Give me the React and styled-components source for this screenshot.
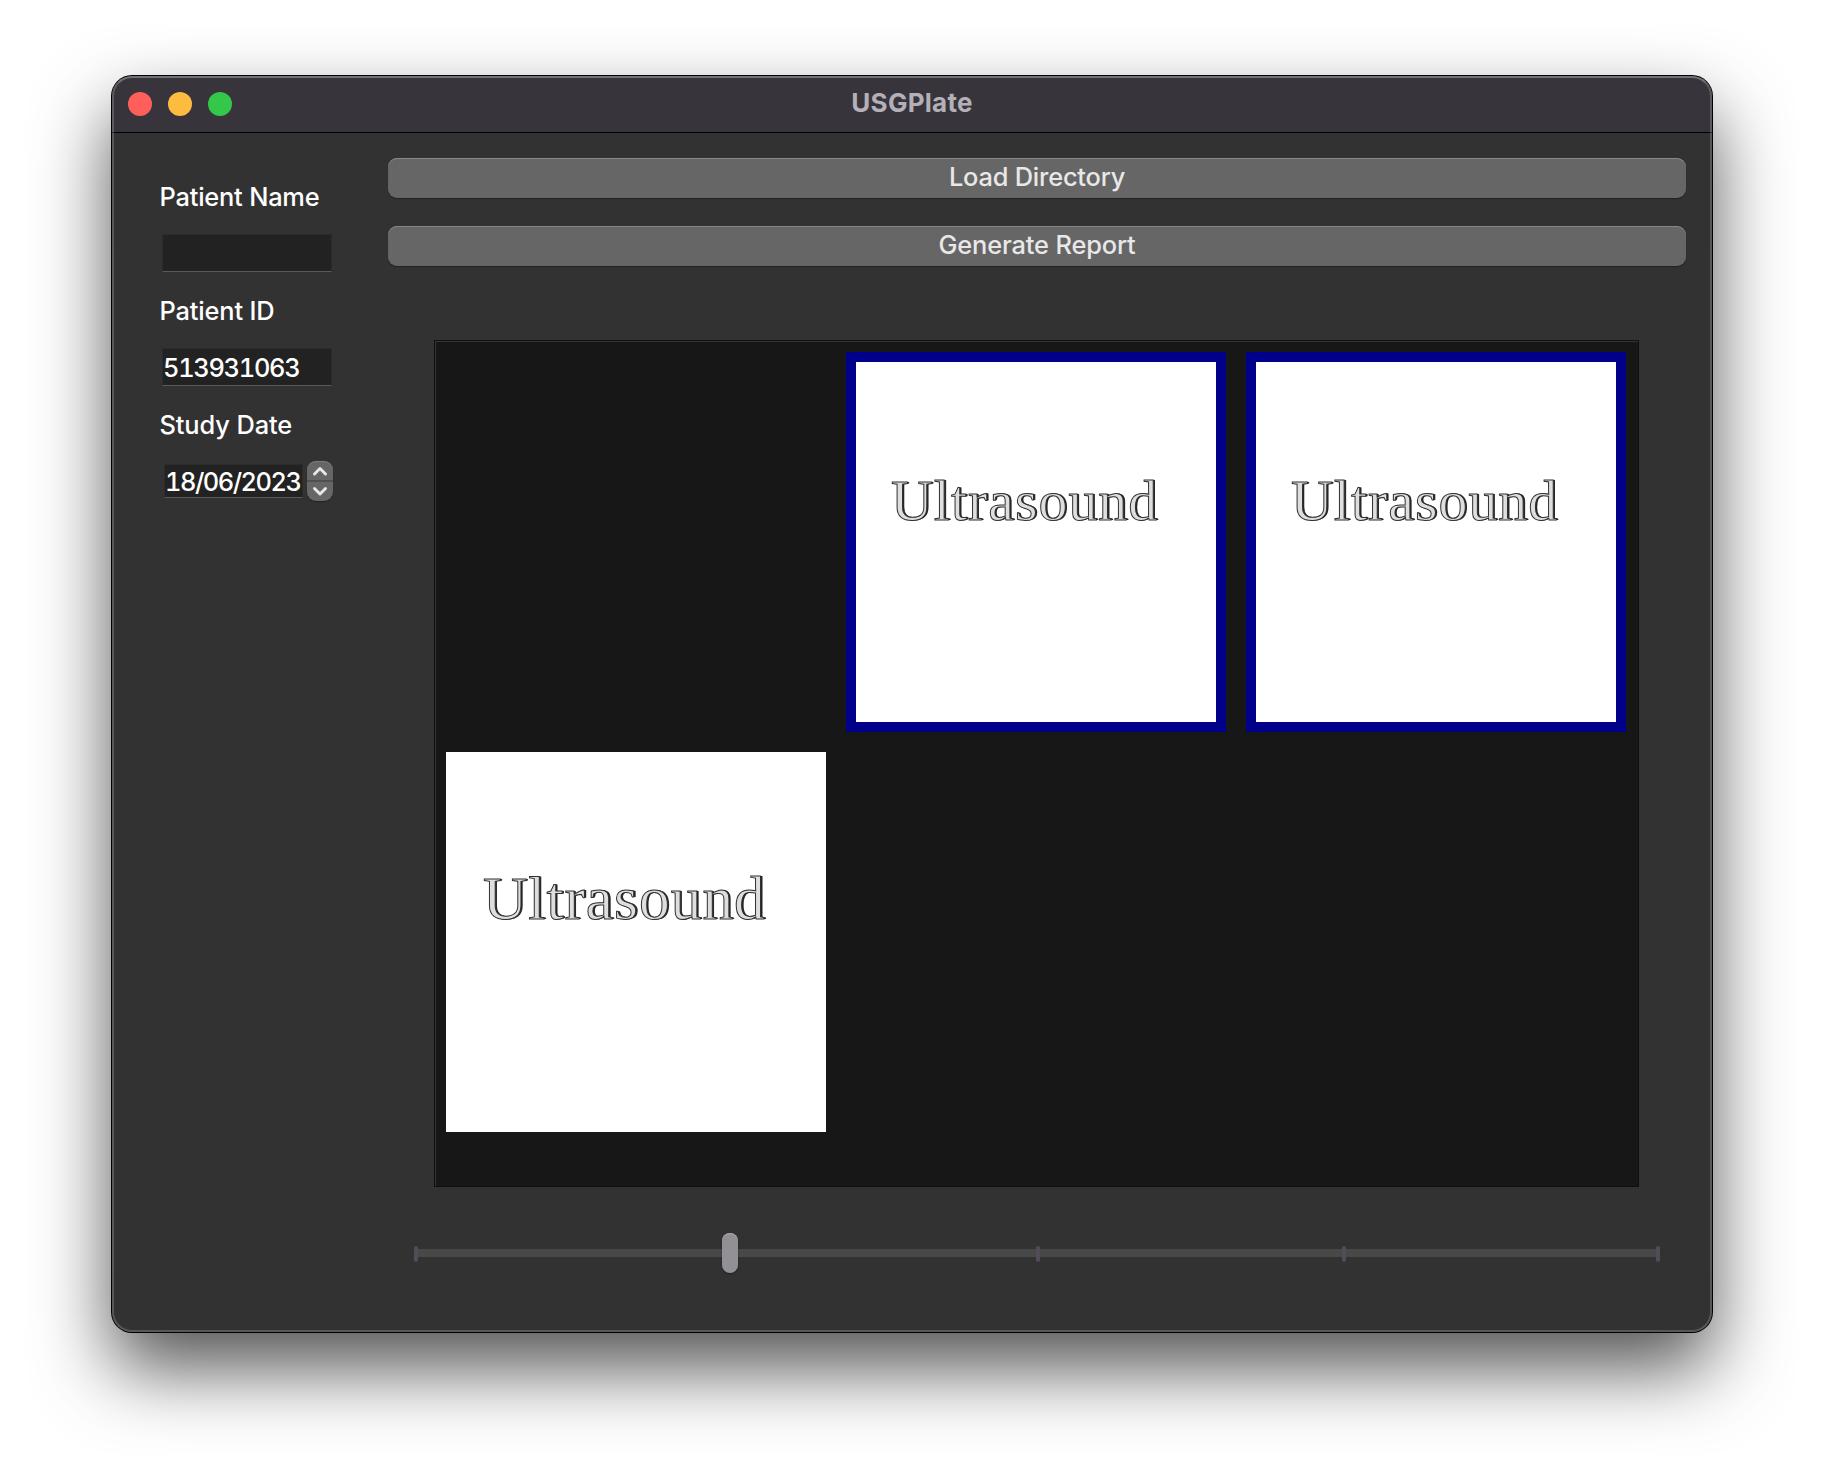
import React from "react";
import styled, { createGlobalStyle } from "styled-components";

const Global = createGlobalStyle`
  * { box-sizing: border-box; }
  html, body { margin: 0; background: #fff; }
  body { font-family: Inter, "Liberation Sans", sans-serif; overflow: hidden; }
`;

const Desktop = styled.div`
  width: 1824px;
  height: 1480px;
  padding: 76px 112px 148px;
  overflow: hidden;
`;

const Window = styled.main`
  position: relative;
  width: 1600px;
  height: 1256px;
  display: flex;
  flex-direction: column;
  border-radius: 20px;
  background: #323232;
  box-shadow: 0 0 0 1px #000, 0 36px 76px rgba(0, 0, 0, 0.68);
  &::after {
    content: "";
    position: absolute;
    inset: 0;
    border: 2px solid rgba(255, 255, 255, 0.19);
    border-top-color: rgba(255, 255, 255, 0.3);
    border-radius: 20px;
    pointer-events: none;
  }
`;

const TitleBar = styled.header`
  height: 57px;
  flex: none;
  display: grid;
  grid-template-columns: 1fr auto 1fr;
  align-items: center;
  padding: 0 16px;
  border-bottom: 1px solid #000;
  border-radius: 20px 20px 0 0;
  background: #38343b;
`;

const Lights = styled.div`
  display: flex;
  gap: 16px;
`;

const Light = styled.span`
  width: 24px;
  height: 24px;
  border-radius: 50%;
  background: ${(p) => p.$color};
`;

const Title = styled.h1`
  margin: 0;
  padding-bottom: 3px;
  font-size: 26px;
  line-height: 32px;
  font-weight: 700;
  letter-spacing: ${(p) => p.$track}px;
  color: #b4b0b8;
`;

const Body = styled.div`
  flex: 1;
  display: flex;
`;

const Sidebar = styled.aside`
  width: 276px;
  padding: 48px 0 0 47.5px;
`;

const Field = styled.div`
  height: 114px;
`;

const Label = styled.label`
  display: block;
  height: 32px;
  font-size: 25.4px;
  line-height: 32px;
  font-weight: 500;
  white-space: nowrap;
  letter-spacing: ${(p) => p.$track}px;
  color: #fff;
`;

const Entry = styled.div`
  width: ${(p) => p.$w}px;
  height: ${(p) => p.$h}px;
  padding: 1px 0 0;
  overflow: hidden;
  background: #222;
  border: 1px solid #2b2b2b;
  border-bottom-color: #5a5a5a;
  font-size: 25.4px;
  font-weight: 500;
  font-variant-numeric: tabular-nums;
  line-height: ${(p) => p.$h - 3}px;
  white-space: nowrap;
  letter-spacing: ${(p) => p.$track || 0}px;
  color: #fff;
`;

const EntryRow = styled.div`
  display: flex;
  align-items: center;
  gap: ${(p) => p.$gap || 0}px;
  height: 40px;
  margin: 20px 0 0 ${(p) => p.$inset}px;
`;

const Stepper = styled.div`
  width: 26px;
  height: 40px;
  border-radius: 9px;
  overflow: hidden;
  background: #666;
  box-shadow: inset 0 1px 0 #7d7d7d, 0 1px 1px rgba(0, 0, 0, 0.3);
`;

const Main = styled.section`
  flex: 1;
  display: flex;
  flex-direction: column;
  padding: 25px 26px 0 0;
`;

const PushButton = styled.button`
  height: 40px;
  flex: none;
  margin: 0 0 28px;
  padding: 0 0 3px;
  border: 0;
  border-radius: 9px;
  background: #666;
  box-shadow: inset 0 1px 0 #888, 0 1px 1px rgba(0, 0, 0, 0.35);
  font-family: inherit;
  font-size: 25.4px;
  font-weight: 500;
  line-height: 37px;
  letter-spacing: ${(p) => p.$track}px;
  color: #e8e8e8;
`;

const Gallery = styled.div`
  width: 1205px;
  height: 847px;
  margin: 46px 0 0 46px;
  padding: 11px;
  display: grid;
  grid-template-columns: repeat(3, 380px);
  grid-auto-rows: 380px;
  gap: 20px;
  border: 1px solid #0f0f0f;
  background: #171717;
  box-shadow: inset 1px 1px 0 #343434;
`;

const Slot = styled.figure`
  margin: 0;
  padding: ${(p) => p.$pad};
  background: ${(p) => (p.$empty ? "transparent" : "#fff")};
  border: ${(p) => (p.$selected ? "10px solid #00008b" : "0")};
`;

const Engraved = styled.span`
  display: block;
  font-family: "Liberation Serif", serif;
  font-size: ${(p) => p.$size}px;
  line-height: 70px;
  letter-spacing: 0.95px;
  white-space: nowrap;
  color: #dedede;
  -webkit-text-stroke: 1px #303030;
  text-shadow: 1px 0 0 #222, 1.8px 0 0 #2c2c2c;
`;

const Slider = styled.div`
  width: 1246px;
  height: 40px;
  margin: 46px 0 0 26px;
  display: grid;
  align-items: center;
  > * { grid-area: 1 / 1; }
`;

const Track = styled.div`
  height: 8px;
  margin: 0 2px;
  background: #484848;
`;

const Ticks = styled.div`
  display: grid;
  grid-template-columns: 314px 308px 306px 314px 4px;
  padding-top: 2px;
`;

const Tick = styled.span`
  width: 4px;
  height: 16px;
  border-radius: 2px;
  background: #524c57;
`;

const Handle = styled.div`
  width: 16px;
  height: 40px;
  margin-left: 308px;
  border-radius: 8px;
  background: #929095;
  box-shadow: inset 0 1px 0 #a9a7ab, 0 1px 2px rgba(0, 0, 0, 0.4);
`;

export default function App() {
  return (
    <Desktop>
      <Global />
      <Window>
        <TitleBar>
          <Lights>
            <Light $color="#ff5f5a" />
            <Light $color="#fdbb40" />
            <Light $color="#34c749" />
          </Lights>
          <Title $track={0.25}>USGPlate</Title>
        </TitleBar>
        <Body>
          <Sidebar>
            <Field>
              <Label $track={-0.2}>Patient Name</Label>
              <EntryRow $inset={2.5}>
                <Entry $w={170} $h={38} />
              </EntryRow>
            </Field>
            <Field>
              <Label $track={-0.15}>Patient ID</Label>
              <EntryRow $inset={2.5}>
                <Entry $w={170} $h={38} $track={-1.3}>513931063</Entry>
              </EntryRow>
            </Field>
            <Field>
              <Label $track={-0.1}>Study Date</Label>
              <EntryRow $inset={4.5} $gap={4}>
                <Entry $w={139} $h={34} $track={-1.5}>18/06/2023</Entry>
                <Stepper>
                  <svg width="26" height="40" viewBox="0 0 26 40" fill="none">
                    <path d="M0 20H26" stroke="#505050" strokeWidth="2" />
                    <path d="M7.5 13L13 7.5L18.5 13M7.5 27.5L13 33L18.5 27.5" stroke="#e6e6e6" strokeWidth="3" strokeLinecap="round" strokeLinejoin="round" />
                  </svg>
                </Stepper>
              </EntryRow>
            </Field>
          </Sidebar>
          <Main>
            <PushButton $track={-0.2}>Load Directory</PushButton>
            <PushButton $track={-0.15}>Generate Report</PushButton>
            <Gallery>
              <Slot $empty />
              <Slot $selected $pad="104px 0 0 35px"><Engraved $size={58}>Ultrasound</Engraved></Slot>
              <Slot $selected $pad="104px 0 0 35px"><Engraved $size={58}>Ultrasound</Engraved></Slot>
              <Slot $pad="111px 0 0 37px"><Engraved $size={61.5}>Ultrasound</Engraved></Slot>
            </Gallery>
            <Slider>
              <Track />
              <Ticks>
                <Tick /><Tick /><Tick /><Tick /><Tick />
              </Ticks>
              <Handle />
            </Slider>
          </Main>
        </Body>
      </Window>
    </Desktop>
  );
}
